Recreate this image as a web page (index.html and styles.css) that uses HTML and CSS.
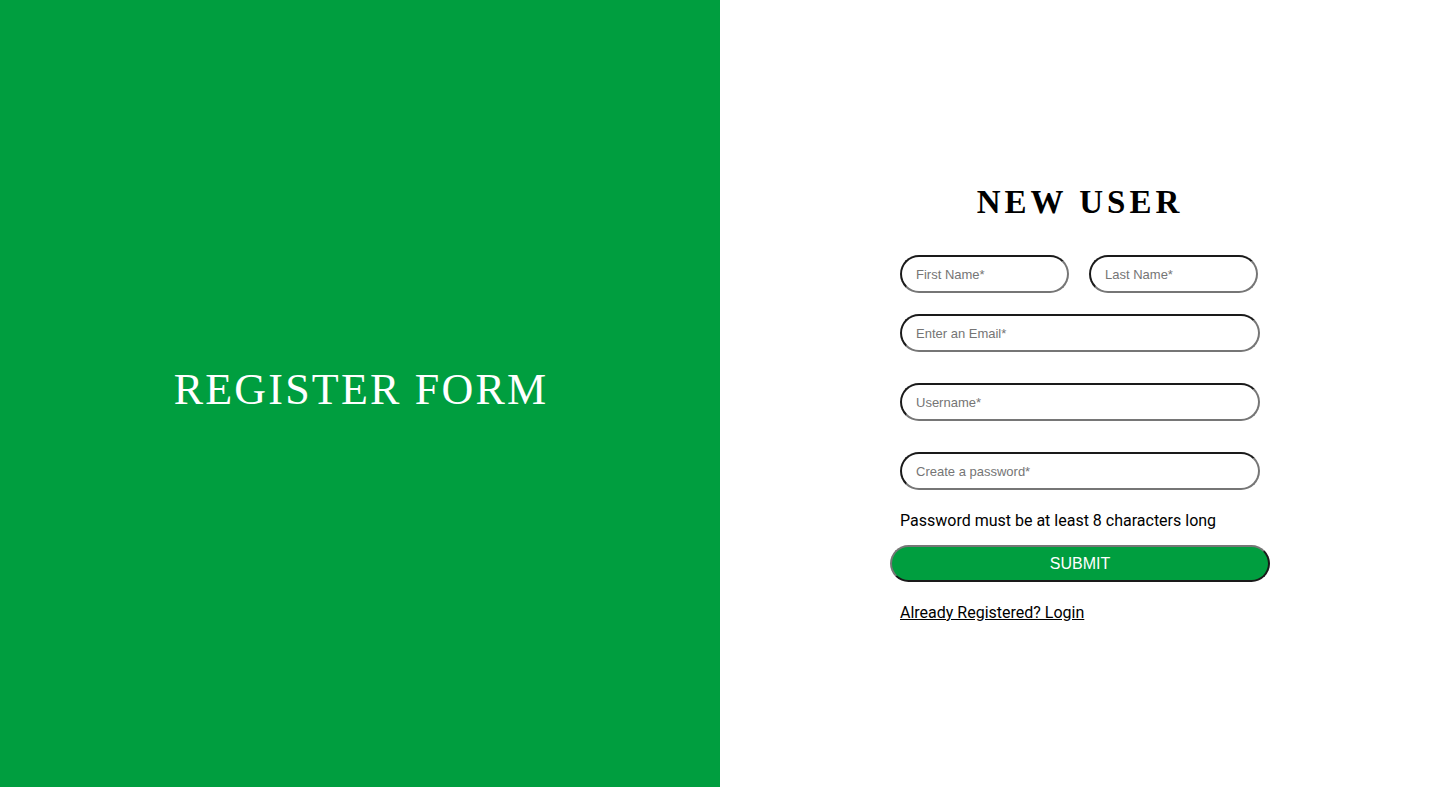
FILE: index.html
```html
<!DOCTYPE html>
<html lang="en">
<head>
    <meta charset="UTF-8">
    <meta name="viewport" content="width=device-width, initial-scale=1.0">
    <title>Register Form</title>
    <link rel="stylesheet" href="styles.css">
</head>
<body>
    <div class="left-side">
        <h1>REGISTER FORM</h1>
    </div>
    <div class="right-side">
        <form class="register-form">
            <h2>NEW USER</h2>
            <div class="name-row">
                <input type="text" placeholder="First Name*">
                <input type="text" placeholder="Last Name*">
            </div>
            <input type="email" class="wide" placeholder="Enter an Email*">
            <input type="text" class="wide" placeholder="Username*">
            <input type="password" class="wide" placeholder="Create a password*">
            <p class="hint">Password must be at least 8 characters long</p>
            <button type="submit" class="submit-btn">SUBMIT</button>
            <a href="#" class="login-link">Already Registered? Login</a>
        </form>
    </div>
</body>
</html>
```
FILE: styles.css
```css
/* Asosiy sahifa */
body {
    margin: 0;
    padding: 0;
    height: 100vh;
    display: flex;
    font-family: Roboto, Arial, sans-serif;
    color: #000;
    overflow: hidden;
}
.left-side {
    width: 720px;
    height: 787px;
    background-color: #009e3f; /* Yashil rang */
    display: flex;
    justify-content: center;
    align-items: center;
}
.left-side h1 {
    margin: 0 0 8px 2px;
    color: #fff;
    font-family: "Liberation Serif", "Times New Roman", serif;
    font-weight: normal;
    font-size: 44px;
    letter-spacing: 2.2px;
}
.right-side {
    width: 720px;
    height: 787px;
    background: #fff;
    display: flex;
    justify-content: center;
}
.register-form {
    width: 360px;
    display: flex;
    flex-direction: column;
    padding-top: 180px;
}
.register-form h2 {
    margin: 0 0 31px;
    text-align: center;
    font-family: "Liberation Serif", "Times New Roman", serif;
    font-weight: bold;
    font-size: 33px;
    line-height: 44px;
    letter-spacing: 4px;
}
.name-row {
    display: flex;
    gap: 20px;
    margin-bottom: 21px;
}
.name-row input {
    width: 169px;
}
input {
    box-sizing: border-box;
    height: 38px;
    border-radius: 19px;
    border: 2px solid;
    border-color: #1a1a1a #767676 #767676 #1a1a1a;
    padding: 0 14px;
    font-family: "Liberation Sans", Arial, sans-serif;
    font-size: 13px;
    outline: none;
}
input::placeholder {
    color: #757575;
}
.wide {
    width: 360px;
    margin-bottom: 31px;
}
.hint {
    margin: -10px 0 15px;
    font-size: 16px;
    line-height: 19px;
}
.submit-btn {
    box-sizing: border-box;
    width: 380px;
    height: 37px;
    margin: 0 -10px;
    border-radius: 19px;
    border: 2px solid;
    border-color: #767676 #1a1a1a #1a1a1a #767676;
    background-color: #009e3f;
    color: #fff;
    font-family: "Liberation Sans", Arial, sans-serif;
    font-size: 16px;
    cursor: pointer;
}
.login-link {
    margin-top: 21px;
    font-size: 16px;
    line-height: 19px;
    color: #000;
    align-self: flex-start;
}
```
